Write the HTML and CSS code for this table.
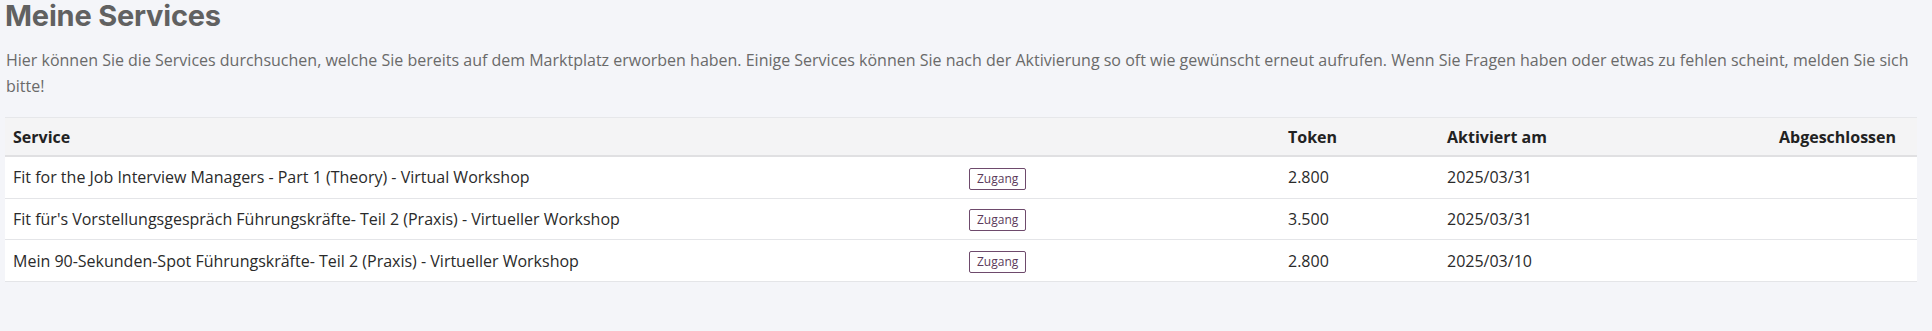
FILE: index.html
```html
<!DOCTYPE html>
<html lang="de">
<head>
<meta charset="utf-8">
<title>Meine Services</title>
<link rel="stylesheet" href="styles.css">
</head>
<body>
<main class="page">
  <h1 class="title">Meine Services</h1>
  <p class="intro">Hier können Sie die Services durchsuchen, welche Sie bereits auf dem Marktplatz erworben haben. Einige Services können Sie nach der Aktivierung so oft wie gewünscht erneut aufrufen. Wenn Sie Fragen haben oder etwas zu fehlen scheint, melden Sie sich bitte!</p>
  <table class="services">
    <colgroup>
      <col class="c-service">
      <col class="c-action">
      <col class="c-token">
      <col class="c-date">
      <col class="c-done">
    </colgroup>
    <thead>
      <tr>
        <th>Service</th>
        <th></th>
        <th>Token</th>
        <th>Aktiviert am</th>
        <th>Abgeschlossen</th>
      </tr>
    </thead>
    <tbody>
      <tr>
        <td>Fit for the Job Interview Managers - Part 1 (Theory) - Virtual Workshop</td>
        <td><a class="access" href="#">Zugang</a></td>
        <td>2.800</td>
        <td>2025/03/31</td>
        <td></td>
      </tr>
      <tr>
        <td>Fit für's Vorstellungsgespräch Führungskräfte- Teil 2 (Praxis) - Virtueller Workshop</td>
        <td><a class="access" href="#">Zugang</a></td>
        <td>3.500</td>
        <td>2025/03/31</td>
        <td></td>
      </tr>
      <tr>
        <td>Mein 90-Sekunden-Spot Führungskräfte- Teil 2 (Praxis) - Virtueller Workshop</td>
        <td><a class="access" href="#">Zugang</a></td>
        <td>2.800</td>
        <td>2025/03/10</td>
        <td></td>
      </tr>
    </tbody>
  </table>
</main>
</body>
</html>
```

FILE: styles.css
```css
html, body {
  margin: 0;
  padding: 0;
  background: #f4f5f9;
}

body {
  font-family: "Open Sans", "Liberation Sans", sans-serif;
  font-size: 16px;
  color: #333;
}

.page {
  padding: 0 15px 0 5px;
}

.title {
  margin: 0;
  padding-top: 0;
  font-family: Inter, "Liberation Sans", sans-serif;
  font-weight: 700;
  font-size: 29px;
  line-height: 32px;
  color: #616161;
  letter-spacing: -0.2px;
}

.intro {
  margin: 15px 0 0 1px;
  font-size: 16px;
  line-height: 26px;
  color: #6a6a6a;
}

.services {
  margin-top: 18px;
  width: 100%;
  border-collapse: collapse;
  table-layout: fixed;
  background: #fff;
}

.c-service { width: 956px; }
.c-action { width: 319px; }
.c-token { width: 159px; }
.c-date { width: 332px; }
.c-done { width: auto; }

.services th,
.services td {
  text-align: left;
  padding: 8px 8px;
  line-height: 24px;
  vertical-align: middle;
  white-space: nowrap;
}

.services thead th {
  background: #f4f4f5;
  font-weight: 700;
  color: #222;
  border-top: 1px solid #e6e7ea;
  border-bottom: 2px solid #e0e0e2;
  padding: 7px 8px 6px 8px;
}

.services tbody td {
  color: #2a2a2a;
  border-bottom: 1px solid #e4e5e8;
}

.access {
  display: inline-block;
  box-sizing: border-box;
  height: 22px;
  padding: 0 7px;
  border: 1px solid #6e4a6c;
  border-radius: 2px;
  font-size: 12px;
  line-height: 20px;
  color: #5b3a5a;
  text-decoration: none;
  vertical-align: middle;
}
```
